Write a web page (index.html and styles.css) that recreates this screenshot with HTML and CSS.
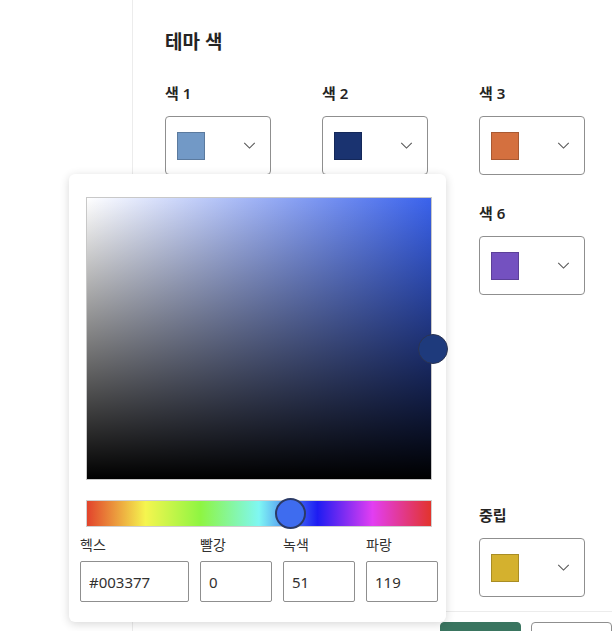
FILE: index.html
```html
<!DOCTYPE html>
<html lang="ko">
<head>
	<meta charset="utf-8">
	<meta name="viewport" content="width=device-width, initial-scale=1">
	<title>테마 색</title>
	<link rel="stylesheet" href="styles.css">
</head>
<body>
<div class="app">
	<div class="sidebar"></div>
	<div class="main">
		<div class="section">
			<h2 class="heading">테마 색</h2>
			<div class="grid">
				<div class="item"><div class="label">색 1</div><button class="drop" type="button"><span class="swatch" style="background:#7299c6"></span><svg class="chev" viewBox="0 0 14 8"><path d="M1 1l6 6 6-6"/></svg></button></div>
				<div class="item"><div class="label">색 2</div><button class="drop" type="button"><span class="swatch" style="background:#1a3370"></span><svg class="chev" viewBox="0 0 14 8"><path d="M1 1l6 6 6-6"/></svg></button></div>
				<div class="item"><div class="label">색 3</div><button class="drop" type="button"><span class="swatch" style="background:#d4703f"></span><svg class="chev" viewBox="0 0 14 8"><path d="M1 1l6 6 6-6"/></svg></button></div>
				<div class="item"><div class="label">색 4</div><button class="drop" type="button"><span class="swatch" style="background:#5f9e8a"></span><svg class="chev" viewBox="0 0 14 8"><path d="M1 1l6 6 6-6"/></svg></button></div>
				<div class="item"><div class="label">색 5</div><button class="drop" type="button"><span class="swatch" style="background:#c04f6a"></span><svg class="chev" viewBox="0 0 14 8"><path d="M1 1l6 6 6-6"/></svg></button></div>
				<div class="item"><div class="label">색 6</div><button class="drop" type="button"><span class="swatch" style="background:#7451c0"></span><svg class="chev" viewBox="0 0 14 8"><path d="M1 1l6 6 6-6"/></svg></button></div>
				<div class="item"><div class="label">색 7</div><button class="drop" type="button"><span class="swatch" style="background:#3c8f5a"></span><svg class="chev" viewBox="0 0 14 8"><path d="M1 1l6 6 6-6"/></svg></button></div>
				<div class="item"><div class="label">색 8</div><button class="drop" type="button"><span class="swatch" style="background:#2a7bb8"></span><svg class="chev" viewBox="0 0 14 8"><path d="M1 1l6 6 6-6"/></svg></button></div>
			</div>
		</div>
		<div class="section second">
			<h2 class="heading">기타 색</h2>
			<div class="grid">
				<div class="item"><div class="label">배경</div><button class="drop" type="button"><span class="swatch" style="background:#ffffff"></span><svg class="chev" viewBox="0 0 14 8"><path d="M1 1l6 6 6-6"/></svg></button></div>
				<div class="item"><div class="label">전경</div><button class="drop" type="button"><span class="swatch" style="background:#252423"></span><svg class="chev" viewBox="0 0 14 8"><path d="M1 1l6 6 6-6"/></svg></button></div>
				<div class="item"><div class="label">중립</div><button class="drop" type="button"><span class="swatch" style="background:#d4b12e"></span><svg class="chev" viewBox="0 0 14 8"><path d="M1 1l6 6 6-6"/></svg></button></div>
			</div>
		</div>
		<div class="footer">
			<button class="btn primary" type="button" aria-label="적용"></button>
			<button class="btn" type="button" aria-label="취소"></button>
		</div>
	</div>

	<!-- color picker popup over the grid -->
	<div class="picker">
		<div class="sat">
			<span class="sat-thumb"></span>
		</div>
		<div class="hue">
			<span class="hue-thumb"></span>
		</div>
		<div class="fields">
			<div class="field"><label>헥스</label><input type="text" value="#003377"></div>
			<div class="field"><label>빨강</label><input type="text" value="0"></div>
			<div class="field"><label>녹색</label><input type="text" value="51"></div>
			<div class="field"><label>파랑</label><input type="text" value="119"></div>
		</div>
	</div>
</div>
</body>
</html>
```

FILE: styles.css
```css
body
{
	margin:0;
	background:#fff;
	font-family:"Noto Sans", "Noto Sans CJK KR", sans-serif;
	color:#252423;
}
.app{
	position:relative;
	display:flex;
	height:631px;
	overflow:hidden;
}
.sidebar{
	width:132px;
	flex:none;
	border-right:1px solid #ececec;
}
.main{
	flex:1;
	padding:30px 0 0 32px;
}
.heading{
	margin:0 0 29px 0;
	font-size:19px;
	line-height:24px;
	font-weight:600;
	color:#252423;
}
.section.second{
	margin-top:37px;
}
.grid{
	display:grid;
	grid-template-columns:106px 106px 106px;
	column-gap:51px;
	row-gap:28px;
}
.label{
	font-size:15px;
	line-height:20px;
	font-weight:600;
	margin-bottom:13px;
}
.drop{
	display:flex;
	align-items:center;
	justify-content:space-between;
	width:106px;
	height:59px;
	padding:0 14px 0 11px;
	box-sizing:border-box;
	background:#fff;
	border:1px solid #8f8f8f;
	border-radius:4px;
}
.swatch{
	width:28px;
	height:28px;
	box-sizing:border-box;
	border:1px solid rgba(0,0,0,0.2);
}
.chev{
	width:13px;
	height:7px;
	fill:none;
	stroke:#555;
	stroke-width:1.2;
}
.footer{
	margin-top:14px;
	border-top:1px solid #ececec;
	padding:10px 0 0 275px;
	display:flex;
	gap:10px;
}
.btn{
	flex:none;
	width:81px;
	height:36px;
	border:1px solid #8f8f8f;
	border-radius:4px;
	background:#fff;
}
.btn.primary{
	background:#3a7560;
	border-color:#3a7560;
}

/* picker */
.picker{
	position:absolute;
	left:69px;
	top:174px;
	width:377px;
	height:448px;
	box-sizing:border-box;
	padding:23px 14px 0 11px;
	background:#fff;
	border-radius:6px;
	box-shadow:0 2px 10px rgba(0,0,0,0.16);
}
.sat{
	position:relative;
	margin-left:6px;
	width:346px;
	height:283px;
	box-sizing:border-box;
	border:1px solid #c8c8c8;
	background:linear-gradient(to top, #000, rgba(0,0,0,0)), linear-gradient(to right, #fff, #3a62ec);
}
.sat-thumb{
	position:absolute;
	left:331px;
	top:136px;
	width:28px;
	height:28px;
	border-radius:50%;
	background:#1e3a7c;
	border:1.5px solid #2b3452;
}
.hue{
	position:relative;
	margin:20px 0 0 6px;
	width:346px;
	height:27px;
	box-sizing:border-box;
	border:1px solid #d0d0d0;
	background:linear-gradient(to right, #e2432c 0%, #f5f54f 17%, #8ef542 33%, #7ff7f3 50%, #1e1cf2 67%, #e23ef2 83%, #e2342c 100%);
}
.hue-thumb{
	position:absolute;
	left:188px;
	top:-3px;
	width:27px;
	height:27px;
	border-radius:50%;
	background:#3e6cef;
	border:2px solid #2b3a66;
}
.fields{
	display:flex;
	gap:11px;
	margin-top:8px;
}
.field label{
	display:block;
	font-size:14px;
	line-height:20px;
	color:#323130;
	margin-bottom:6px;
}
.field input{
	width:72px;
	height:41px;
	box-sizing:border-box;
	padding:0 8px;
	border:1px solid #8f8f8f;
	border-radius:2px;
	font-family:"Noto Sans", "Noto Sans CJK KR", sans-serif;
	font-size:15px;
	color:#323130;
}
.field:first-child input{
	width:109px;
}
```
